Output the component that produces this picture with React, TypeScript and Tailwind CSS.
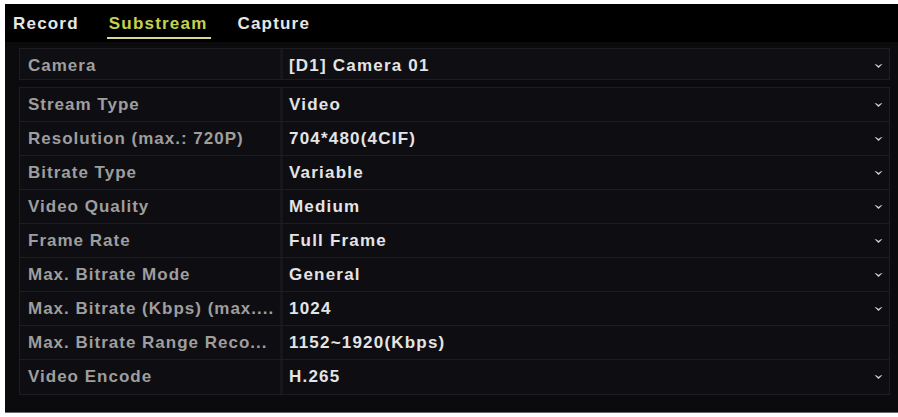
import React from "react";

type Row = { label: string; value: string; dropdown: boolean };

const rows: Row[] = [
  { label: "Stream Type", value: "Video", dropdown: true },
  { label: "Resolution (max.: 720P)", value: "704*480(4CIF)", dropdown: true },
  { label: "Bitrate Type", value: "Variable", dropdown: true },
  { label: "Video Quality", value: "Medium", dropdown: true },
  { label: "Frame Rate", value: "Full Frame", dropdown: true },
  { label: "Max. Bitrate Mode", value: "General", dropdown: true },
  { label: "Max. Bitrate (Kbps) (max....", value: "1024", dropdown: true },
  { label: "Max. Bitrate Range Reco...", value: "1152~1920(Kbps)", dropdown: false },
  { label: "Video Encode", value: "H.265", dropdown: true },
];

function Caret() {
  return (
    <svg width="9" height="6" viewBox="0 0 9 6" className="shrink-0">
      <path d="M0.5 1 L4.5 5 L8.5 1 L6.5 1.6 L4.5 3 L2.5 1.6 Z" fill="#d8d8d8" />
    </svg>
  );
}

function FieldRow({ row, last }: { row: Row; last?: boolean }) {
  return (
    <div
      className={`flex h-[34px] items-stretch ${last ? "" : "border-b border-[#1d1d22]"}`}
    >
      <div className="flex w-[263px] items-center overflow-hidden whitespace-nowrap border-r-[3px] border-[#17171b] pl-[8px] tracking-[1px] text-[#9e9e9e]">
        <span>{row.label}</span>
      </div>
      <div className="flex flex-1 items-center justify-between pl-[6px] pr-[6px] text-[#e4e4e4]">
        <span>{row.value}</span>
        {row.dropdown && <Caret />}
      </div>
    </div>
  );
}

export default function App() {
  return (
    <div
      className="flex h-[417px] w-[898px] flex-col bg-white pb-[4px] pl-[5px] pt-[4px]"
      style={{ fontFamily: '"Liberation Sans", Arial, sans-serif' }}
    >
      <div className="flex flex-1 flex-col border-b border-[#6a6a6a] bg-[#0b0b0e] text-[17px] font-bold tracking-[1.2px]">
        {/* tab strip */}
        <div className="flex h-[38px] items-start gap-[30px] bg-black pl-[8px] pt-[11px]">
          <span className="leading-[18px] text-[#e6e6e6]">Record</span>
          <span className="relative leading-[18px] text-[#c6d24e]">
            Substream
            <span className="absolute -left-[2px] -right-[4px] top-[22px] h-[2px] bg-[#d6da8c]" />
          </span>
          <span className="leading-[18px] text-[#e6e6e6]">Capture</span>
        </div>

        <div className="flex flex-1 flex-col pl-[14px] pr-[8px] pt-[6px]">
          {/* camera selector */}
          <div className="flex h-[32px] items-stretch border border-[#1d1d22] bg-[#0f0e13]">
            <div className="flex w-[263px] items-center border-r-[3px] border-[#17171b] pl-[8px] pt-[3px] tracking-[1px] text-[#9e9e9e]">
              Camera
            </div>
            <div className="flex flex-1 items-center justify-between pl-[6px] pr-[6px] pt-[3px] text-[#e4e4e4]">
              <span>[D1] Camera 01</span>
              <Caret />
            </div>
          </div>

          {/* parameters */}
          <div className="mt-[7px] flex flex-col border border-[#1d1d22] bg-[#0e0d12]">
            {rows.map((r, i) => (
              <FieldRow key={r.label} row={r} last={i === rows.length - 1} />
            ))}
          </div>
        </div>
      </div>
    </div>
  );
}
